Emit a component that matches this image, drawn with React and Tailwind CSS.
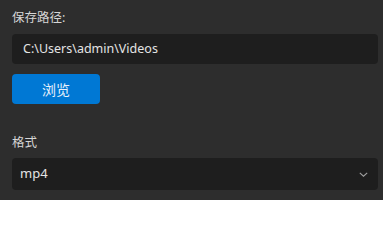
export default function App() {
  return (
    <div
      className="w-[383px] h-[200px] bg-[#2d2d2d] pl-3 pr-[5px] pt-[9px] text-[#e4e4e4] overflow-hidden"
      style={{ fontFamily: '"Noto Sans", "Noto Sans CJK SC", sans-serif' }}
    >
      {/* Save path */}
      <div className="text-[12.5px] leading-[17px] text-[#d6d6d6]">保存路径:</div>
      <div className="mt-[8px] h-[30px] rounded-[4px] bg-[#1e1e1e] pl-[11px] flex items-center text-[12.5px]">
        C:\Users\admin\Videos
      </div>
      <button className="mt-[10px] w-[88px] h-[30px] rounded-[4px] bg-[#0078d4] text-[14px] text-[#e8f1fb] flex items-center justify-center">
        浏览
      </button>

      {/* Format */}
      <div className="mt-[30px] text-[12.5px] leading-[17px] text-[#d6d6d6]">格式</div>
      <div className="mt-[7px] h-[32px] rounded-[4px] bg-[#1e1e1e] pl-[8px] pr-[10px] flex items-center justify-between text-[13px]">
        <span>mp4</span>
        <svg width="9" height="5" viewBox="0 0 9 5" fill="none" stroke="#a0a0a0" strokeWidth="1.1">
          <path d="M0.8 0.8l3.7 3.4 3.7-3.4" />
        </svg>
      </div>
    </div>
  );
}
